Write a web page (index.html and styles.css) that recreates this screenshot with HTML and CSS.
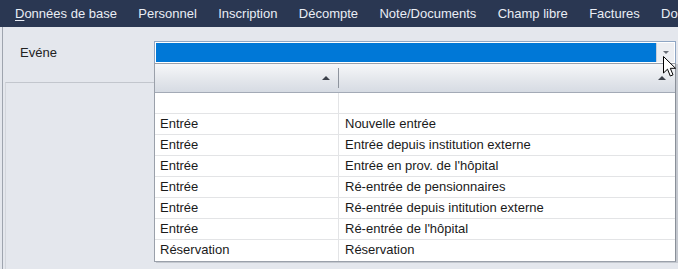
FILE: index.html
```html
<!DOCTYPE html>
<html>
<head>
<meta charset="utf-8">
<link rel="stylesheet" href="styles.css">
</head>
<body>
<div class="menubar">
  <span class="mi"><u>D</u>onnées de base</span>
  <span class="mi">Personnel</span>
  <span class="mi">Inscription</span>
  <span class="mi">Décompte</span>
  <span class="mi">Note/Documents</span>
  <span class="mi">Champ libre</span>
  <span class="mi">Factures</span>
  <span class="mi">Documents</span>
</div>
<div class="content">
  <div class="formrow">
    <div class="label">Evéne</div>
    <div class="combo">
      <div class="combo-field"></div>
      <div class="combo-btn"><span class="tri-down"></span></div>
      <div class="popup">
        <div class="head">
          <div class="hcell c1"><span class="tri-up"></span></div>
          <div class="hcell c2"><span class="tri-up"></span></div>
        </div>
        <div class="row"><div class="cell c1"></div><div class="cell c2"></div></div>
        <div class="row"><div class="cell c1">Entrée</div><div class="cell c2">Nouvelle entrée</div></div>
        <div class="row"><div class="cell c1">Entrée</div><div class="cell c2">Entrée depuis institution externe</div></div>
        <div class="row"><div class="cell c1">Entrée</div><div class="cell c2">Entrée en prov. de l'hôpital</div></div>
        <div class="row"><div class="cell c1">Entrée</div><div class="cell c2">Ré-entrée de pensionnaires</div></div>
        <div class="row"><div class="cell c1">Entrée</div><div class="cell c2">Ré-entrée depuis intitution externe</div></div>
        <div class="row"><div class="cell c1">Entrée</div><div class="cell c2">Ré-entrée de l'hôpital</div></div>
        <div class="row"><div class="cell c1">Réservation</div><div class="cell c2">Réservation</div></div>
      </div>
      <svg class="cursor" width="14" height="22" viewBox="0 0 14 22">
        <path d="M0.5 0.5 L0.5 17 L4.5 13.2 L7.3 20 L10 18.8 L7.3 12.3 L12.5 12.3 Z" fill="#fff" stroke="#000" stroke-width="1"/>
      </svg>
    </div>
  </div>
  <div class="panel"></div>
</div>
</body>
</html>
```
FILE: styles.css
```css
html, body {
  margin: 0;
  padding: 0;
  width: 678px;
  height: 269px;
  overflow: hidden;
  background: #e4e7ed;
  font-family: "Liberation Sans", Arial, sans-serif;
  font-size: 13px;
}
.menubar {
  height: 27px;
  background: #2a3752;
  display: flex;
  align-items: center;
  padding-left: 5px;
  white-space: nowrap;
  overflow: hidden;
}
.mi {
  color: #e9edf5;
  padding: 0 10.7px;
  flex: none;
}
.mi:first-child {
  padding-left: 10px;
}
.mi u {
  text-decoration-thickness: 1px;
  text-underline-offset: 2px;
}
.content {
  margin-left: 2px;
  border-left: 1px solid #9ea4ae;
  height: 242px;
  display: flex;
  flex-direction: column;
}
.formrow {
  display: flex;
  padding-top: 14px;
  height: 26px;
}
.label {
  padding-left: 17px;
  padding-top: 4px;
  color: #222;
  box-sizing: border-box;
  width: 151px;
}
.combo {
  position: relative;
  width: 522px;
  height: 23px;
  box-sizing: border-box;
  border: 1px solid #8fa6c4;
  background: #fff;
  display: flex;
  padding: 1px;
}
.combo-field {
  flex: 1;
  background: #0078d7;
}
.combo-btn {
  width: 17px;
  display: flex;
  align-items: center;
  justify-content: center;
  background: #eceef2;
  border-left: 1px solid #c9cfd8;
}
.tri-down {
  width: 0;
  height: 0;
  border-left: 3px solid transparent;
  border-right: 3px solid transparent;
  border-top: 3px solid #6a6f78;
}
.popup {
  position: absolute;
  left: -1px;
  top: 21px;
  width: 520px;
  border: 1px solid #9aa0aa;
  border-right: 1px solid #8a9099;
  box-shadow: 2px 1px 0 #c4c8cf;
  background: #fff;
  z-index: 2;
}
.head {
  display: flex;
  height: 28px;
  background: linear-gradient(#f6f7f9, #e4e7ec 55%, #d6dbe3);
  border-bottom: 1px solid #a3aab6;
}
.hcell {
  display: flex;
  align-items: center;
  justify-content: flex-end;
  box-sizing: border-box;
}
.hcell.c1 {
  width: 184px;
  padding-right: 8px;
  border-right: 1px solid #8e949e;
  margin: 4px 0;
}
.hcell.c2 {
  flex: 1;
  padding-right: 9px;
}
.tri-up {
  width: 0;
  height: 0;
  border-left: 4px solid transparent;
  border-right: 4px solid transparent;
  border-bottom: 4px solid #3c414a;
}
.row {
  display: flex;
  height: 20px;
  border-bottom: 1px solid #e3e4e6;
  color: #1a1a1a;
}
.row:last-child {
  border-bottom: none;
  height: 21px;
}
.cell {
  line-height: 20px;
  white-space: nowrap;
  box-sizing: border-box;
}
.cell.c1 {
  width: 184px;
  padding-left: 5px;
  border-right: 1px solid #e3e4e6;
}
.cell.c2 {
  flex: 1;
  padding-left: 6px;
}
.cursor {
  position: absolute;
  left: 508px;
  top: 14px;
  z-index: 3;
}
.panel {
  margin-top: 15px;
  margin-left: 2px;
  border-top: 1px solid #c2c6cd;
  border-left: 1px solid #d3d6dc;
  flex: 1;
}
```
